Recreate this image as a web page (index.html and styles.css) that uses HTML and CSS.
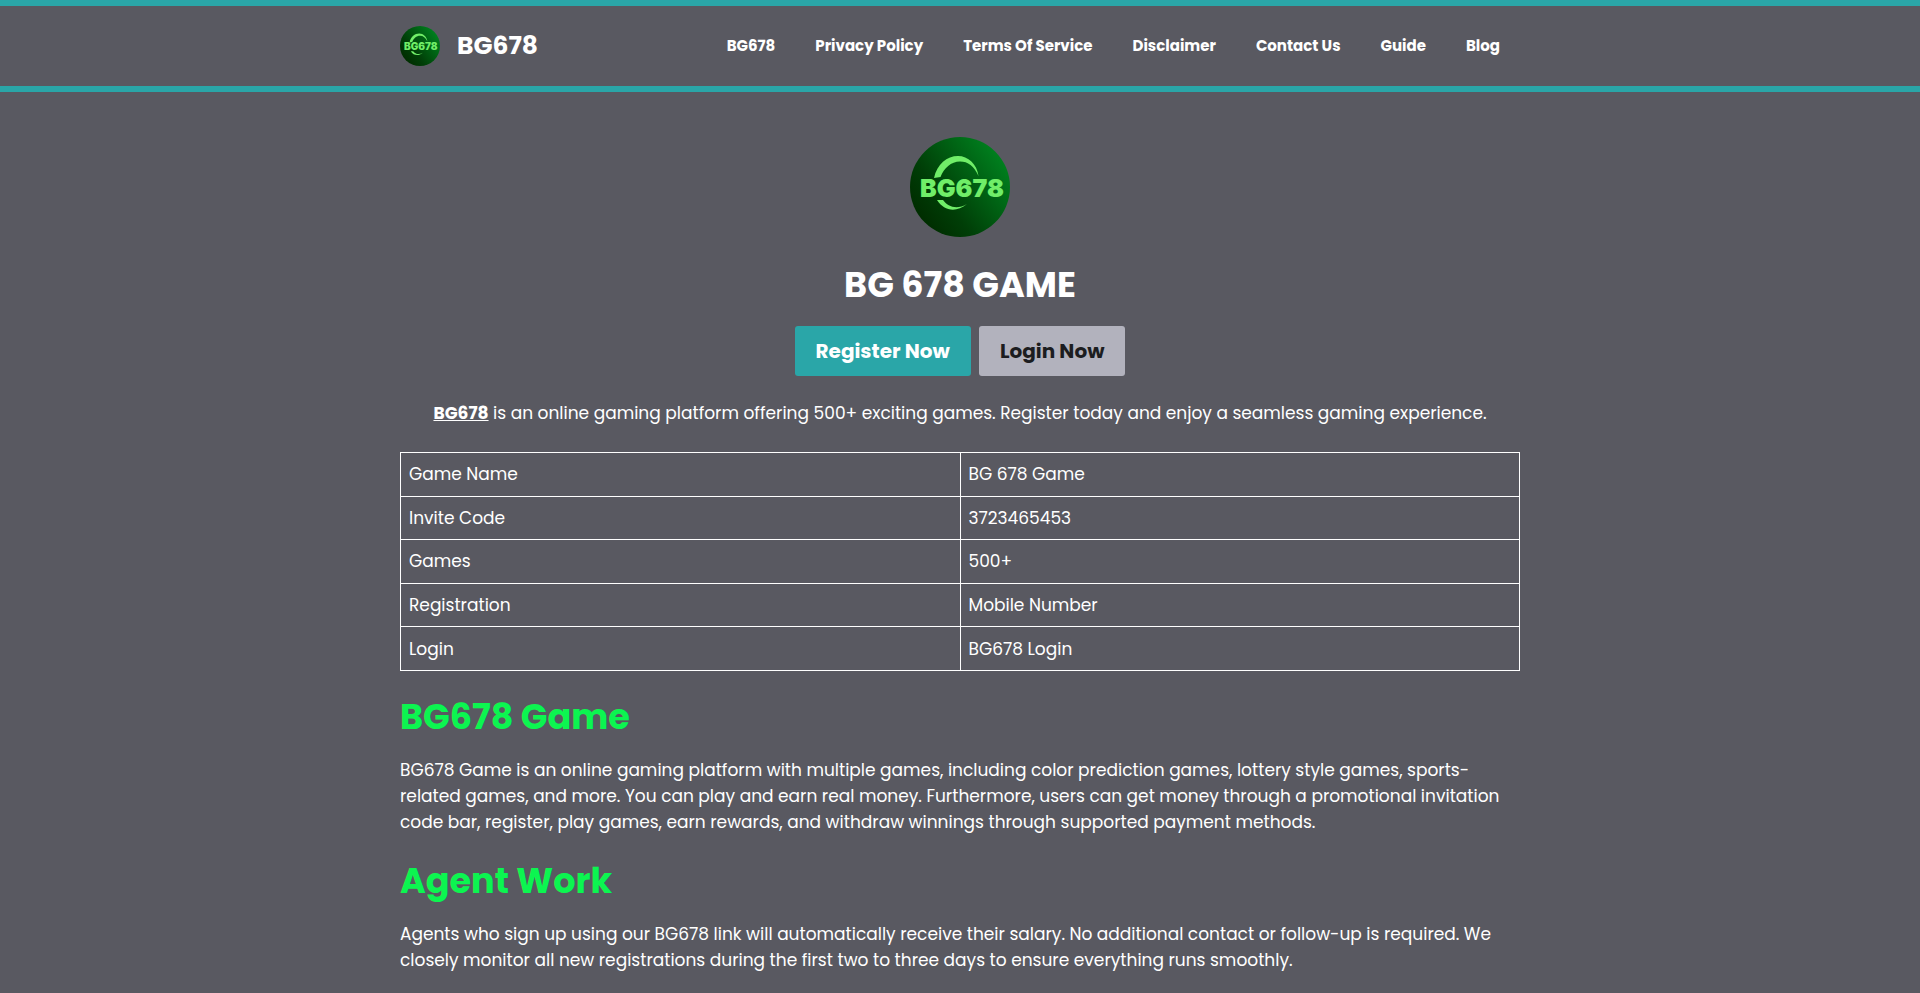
FILE: index.html
```html
<!DOCTYPE html>
<html lang="en">
<head>
    <meta charset="UTF-8">
    <meta name="viewport" content="width=device-width, initial-scale=1.0">
    <title>BG678</title>
    <link rel="stylesheet" href="styles.css">
</head>
<body>
    <header class="site-header">
        <div class="container header-inner">
            <a href="#" class="brand">
                <svg class="brand-logo" viewBox="0 0 100 100" aria-hidden="true">
                    <defs>
                        <linearGradient id="green" x1="0.1" y1="0.8" x2="0.9" y2="0.2">
                            <stop offset="0" stop-color="#002d00"/>
                            <stop offset="0.3" stop-color="#003e07"/>
                            <stop offset="1" stop-color="#007f1e"/>
                        </linearGradient>
                    </defs>
                    <circle cx="50" cy="50" r="50" fill="url(#green)"/>
                    <path d="M24 41C27 27 37 19 48 19C58 19 67 27 68.500 39C64 29 58 24.500 50 24.500C41 24.500 34 31 30.500 40Z" fill="#70ee68"/>
                    <path d="M27 63L33 63C38 70 47 73 57 67C46 76 34 74 27 63Z" fill="#70ee68"/>
                    <text x="52" y="60" text-anchor="middle" class="logo-text">BG678</text>
                </svg>
                <span>BG678</span>
            </a>
            <nav class="main-nav">
                <a href="#">BG678</a>
                <a href="#">Privacy Policy</a>
                <a href="#">Terms Of Service</a>
                <a href="#">Disclaimer</a>
                <a href="#">Contact Us</a>
                <a href="#">Guide</a>
                <a href="#">Blog</a>
            </nav>
        </div>
    </header>

    <main class="container content">
        <div class="hero">
            <svg class="hero-logo" viewBox="0 0 100 100" aria-hidden="true">
                <circle cx="50" cy="50" r="50" fill="url(#green)"/>
                <path d="M24 41C27 27 37 19 48 19C58 19 67 27 68.500 39C64 29 58 24.500 50 24.500C41 24.500 34 31 30.500 40Z" fill="#70ee68"/>
                <path d="M27 63L33 63C38 70 47 73 57 67C46 76 34 74 27 63Z" fill="#70ee68"/>
                <text x="52" y="60" text-anchor="middle" class="logo-text">BG678</text>
            </svg>
            <h1>BG 678 GAME</h1>
            <div class="buttons">
                <button type="button" class="btn btn-register">Register Now</button>
                <button type="button" class="btn btn-login">Login Now</button>
            </div>
            <p><a href="#">BG678</a> is an online gaming platform offering 500+ exciting games. Register today and enjoy a seamless gaming experience.</p>
        </div>

        <table class="info">
            <tr><td>Game Name</td><td>BG 678 Game</td></tr>
            <tr><td>Invite Code</td><td>3723465453</td></tr>
            <tr><td>Games</td><td>500+</td></tr>
            <tr><td>Registration</td><td>Mobile Number</td></tr>
            <tr><td>Login</td><td>BG678 Login</td></tr>
        </table>

        <h2>BG678 Game</h2>
        <p>BG678 Game is an online gaming platform with multiple games, including color prediction games, lottery style games, sports-related games, and more. You can play and earn real money. Furthermore, users can get money through a promotional invitation code bar, register, play games, earn rewards, and withdraw winnings through supported payment methods.</p>

        <h2>Agent Work</h2>
        <p>Agents who sign up using our BG678 link will automatically receive their salary. No additional contact or follow-up is required. We closely monitor all new registrations during the first two to three days to ensure everything runs smoothly.</p>
    </main>
</body>
</html>
```

FILE: styles.css
```css
* {
    box-sizing: border-box;
}
body {
    margin: 0;
    background-color: #595961;
    color: #fff;
    font-family: Poppins, Inter, sans-serif;
    font-size: 17px;
    line-height: 26px;
}
a {
    color: #fff;
}
.container {
    width: 100%;
    max-width: 1120px;
    margin: 0 auto;
}
.site-header {
    border-top: 6px solid #2aa6a8;
    border-bottom: 6px solid #2aa6a8;
}
.header-inner {
    display: flex;
    justify-content: space-between;
    align-items: center;
    min-height: 80px;
}
.brand {
    display: flex;
    align-items: center;
    gap: 17px;
    font-size: 25px;
    font-weight: 700;
    text-decoration: none;
}
.brand-logo {
    width: 40px;
    height: 40px;
}
.main-nav {
    display: flex;
    font-size: 15px;
    font-weight: 700;
}
.main-nav a {
    padding: 0 20px;
    text-decoration: none;
}
.content {
    padding-top: 45px;
}
.hero {
    text-align: center;
}
.hero-logo {
    display: block;
    width: 100px;
    height: 100px;
    margin: 0 auto 21px;
}
.logo-text {
    font-family: Inter, sans-serif;
    font-size: 25px;
    font-weight: 900;
    fill: #70ee68;
}
h1, h2 {
    margin: 0 0 14px;
    font-size: 35px;
    line-height: 54px;
    font-weight: 700;
}
h2 {
    margin-bottom: 13px;
    color: #0cf550;
}
p {
    margin: 0 0 19px;
}
.buttons {
    display: flex;
    justify-content: center;
    gap: 8px;
    margin-bottom: 24px;
}
.btn {
    padding: 10px 21px;
    border: none;
    border-radius: 3px;
    font-family: inherit;
    font-size: 20px;
    font-weight: 700;
    line-height: 30px;
    cursor: pointer;
}
.btn-register {
    background-color: #2aa6a8;
    color: #fff;
}
.btn-login {
    background-color: #b2b2bd;
    color: #1c1d20;
}
.hero p {
    margin-bottom: 26px;
}
.hero p a {
    font-weight: 700;
}
.info {
    width: 100%;
    height: 219px;
    margin-bottom: 19px;
    border-collapse: collapse;
    table-layout: fixed;
}
.info td {
    padding: 8px;
    border: 1px solid #fff;
}
```
